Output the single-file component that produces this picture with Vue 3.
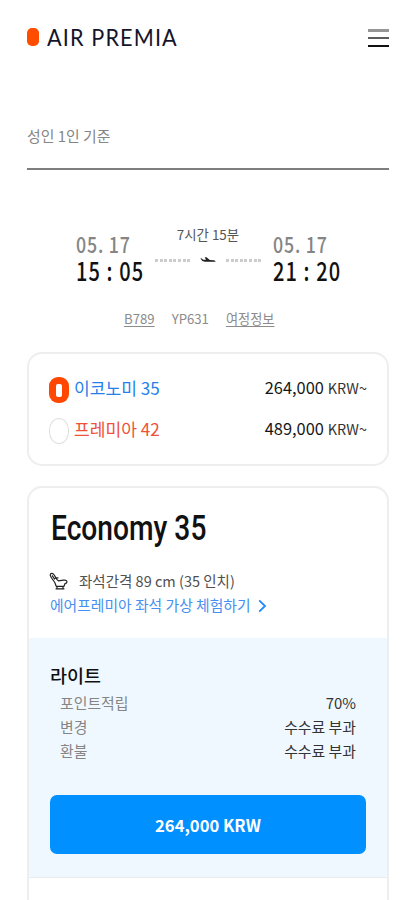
<script setup>
const cabins = [
  { name: '이코노미 35', price: '264,000', selected: true },
  { name: '프레미아 42', price: '489,000', selected: false },
]
const rules = [
  { label: '포인트적립', value: '70%' },
  { label: '변경', value: '수수료 부과' },
  { label: '환불', value: '수수료 부과' },
]
</script>

<template>
  <div class="page">
    <header class="header">
      <div class="brand">
        <span class="mark"></span>
        <span class="wordmark"><span>AIR PREMIA</span></span>
      </div>
      <div class="menu"><i class="m1"></i><i class="m2"></i><i class="m3"></i></div>
    </header>

    <div class="basis">성인 1인 기준</div>

    <section class="flight">
      <div class="stop">
        <div class="date"><span>05. 17</span></div>
        <div class="time"><span>15 : 05</span></div>
      </div>
      <div class="route">
        <div class="duration">7시간 15분</div>
        <div class="track">
          <span class="dots"></span>
          <svg width="16" height="8" viewBox="0 0 16 8"><path d="M.3 2.2 1.8 2.4 3.2 3.7 6 3.8 4.7 1.2 6.5 1.3 9.8 4 14 4.3Q16 4.8 15.5 5.8L5 5.8Q1.5 5.3.3 2.2Z" fill="#222" /></svg>
          <span class="dots"></span>
        </div>
      </div>
      <div class="stop">
        <div class="date"><span>05. 17</span></div>
        <div class="time"><span>21 : 20</span></div>
      </div>
    </section>

    <div class="details"><u>B789</u><span>YP631</span><u>여정정보</u></div>

    <section class="card cabins">
      <div v-for="c in cabins" :key="c.name" class="cabin" :class="{ selected: c.selected }">
        <span class="radio"><i v-if="c.selected"></i></span>
        <span class="name">{{ c.name }}</span>
        <span class="price">{{ c.price }}<small>KRW~</small></span>
      </div>
    </section>

    <section class="card fare">
      <h2><span>Economy 35</span></h2>
      <div class="seat">
        <svg width="20" height="20" viewBox="0 0 20 20" fill="none" stroke="#222" stroke-width="1.2" stroke-linejoin="round" stroke-linecap="round"><path d="M1.3 4.5Q1 2.2 3 2.3 4.5 2.5 5.2 4L8 8.6 9.5 9.8 14.5 9.2Q18.3 8.8 17.9 11 17.5 12.6 16 12.5L15 15.3 7.2 15.3 5.8 11.5 2.6 7Z" /><path d="M3.4 4.8 5.5 8M6.2 7.2 9 6.8M8 15.5v2.2M14 15.5v2.2M7 17.8h8" /></svg>
        <span>좌석간격 89 cm (35 인치)</span>
      </div>
      <div class="link">
        <span>에어프레미아 좌석 가상 체험하기</span>
        <svg width="9" height="14" viewBox="0 0 9 14" fill="none" stroke="#2188ff" stroke-width="1.8"><path d="M1.2 1.4 7 7 1.2 12.6" /></svg>
      </div>
      <div class="light">
        <h3>라이트</h3>
        <dl>
          <div v-for="r in rules" :key="r.label"><dt>{{ r.label }}</dt><dd>{{ r.value }}</dd></div>
        </dl>
        <button>264,000 KRW</button>
      </div>
    </section>
  </div>
</template>

<style>
body { background: #fff; overflow: hidden; }
</style>

<style scoped>
* { box-sizing: border-box; }
.page { width: 415px; height: 900px; overflow: hidden; padding: 0 26px 0 27px; background: #fff; color: #111; font-family: "Noto Sans CJK KR", sans-serif; white-space: nowrap; }
.header { height: 112px; padding-top: 26px; display: flex; justify-content: space-between; align-items: flex-start; }
.brand { display: flex; align-items: center; height: 22px; }
.mark { width: 12px; height: 18px; border-radius: 5px; background: #ff4d00; }
.wordmark { margin-left: 8px; width: 132px; font: 400 23px/22px Lato, sans-serif; color: #14142b; }
.wordmark span { display: inline-block; letter-spacing: 1.2px; transform: scaleX(.94); transform-origin: left; }
.menu { width: 21px; padding-top: 3px; display: flex; flex-direction: column; }
.menu i { display: block; }
.m1 { height: 3px; background: #969696; }
.m2 { height: 2px; margin-top: 5px; background: #5d5d5d; }
.m3 { height: 2px; margin-top: 6px; background: #111; }
.basis { height: 58px; padding-top: 12px; line-height: 24px; font-size: 14.9px; color: #858585; border-bottom: 2px solid #7e7e7e; }
.flight { display: flex; padding: 60px 0 0 48px; height: 132px; }
.stop { width: 79px; }
.date, .time { height: 26px; line-height: 26px; }
.time { margin-top: 1px; }
.date span, .time span { display: inline-block; transform-origin: left; }
.date span { font-size: 22px; font-weight: 500; color: #858585; letter-spacing: 1px; transform: scaleX(.81); margin-left: 1px; }
.time span { font-size: 26px; font-weight: 500; letter-spacing: 1.4px; transform: scaleX(.77); margin-left: 1px; }
.route { width: 118px; padding: 0 11px 0 1px; }
.duration { width: 106px; text-align: center; font-size: 13.4px; line-height: 20px; margin-top: -6px; color: #555; }
.track { display: flex; align-items: center; justify-content: space-between; height: 12px; margin: 10px 0 0; }
.dots { width: 35px; height: 3px; background: repeating-linear-gradient(90deg, #ccc 0 3px, transparent 3px 4.6px); }
.details { display: flex; gap: 17px; height: 50px; padding: 5px 0 0 97px; font-size: 13.2px; line-height: 24px; color: #8c8c8c; }
.details u { text-underline-offset: 2px; }
.card { border: 2px solid #eee; border-radius: 15px; }
.cabins { height: 114px; padding: 15px 20px 0; }
.cabin { display: flex; align-items: center; height: 41px; color: #ee5138; font-size: 17.1px; line-height: 24px; }
.selected { color: #267fe9; }
.radio { width: 20px; height: 26px; margin-top: 1px; border: 1px solid #ddd; border-radius: 10px / 12px; display: flex; align-items: center; justify-content: center; }
.selected .radio { border: 0; background: #ff4700; border-radius: 9px; }
.radio i { width: 6px; height: 13px; border-radius: 2px; background: #fff; }
.name { margin: 0 0 4px 5px; }
.price { margin: 0 0 4px auto; color: #151515; font-size: 16.4px; }
.price small { margin-left: 4px; font-size: 14.4px; color: #333; }
.fare { margin-top: 20px; height: 470px; border-bottom: 0; border-radius: 15px 15px 0 0; }
h2 { margin: 0; padding: 19px 0 0 22px; height: 79px; font: 500 35px/44px Roboto, sans-serif; }
h2 span { display: inline-block; transform: scaleX(.805); transform-origin: left; }
.seat { display: flex; align-items: center; height: 26px; padding-left: 20px; font-size: 14.5px; color: #505050; }
.seat svg { margin-top: 2px; }
.seat span { margin-left: 10px; }
.link { display: flex; align-items: center; height: 23px; padding-left: 21px; font-size: 14.8px; color: #4590f0; }
.link svg { margin: 2px 0 0 7px; }
.light { height: 240px; margin-top: 22px; padding: 23px 21px 0; background: #f0f8ff; border-bottom: 1px solid #e8eced; }
h3 { margin: 0; font-size: 18.5px; line-height: 28px; font-weight: 500; }
dl { margin: 0; padding: 2px 10px 0; font-size: 14.9px; }
dl div { display: flex; justify-content: space-between; height: 24px; line-height: 24px; }
dt { color: #858585; }
dd { margin: 0; color: #333; }
button { display: block; width: 100%; height: 59px; margin-top: 32px; padding: 0; border: 0; border-radius: 7px; background: #0090ff; color: #fff; font: 700 16.6px/24px "Noto Sans CJK KR", sans-serif; }
</style>
